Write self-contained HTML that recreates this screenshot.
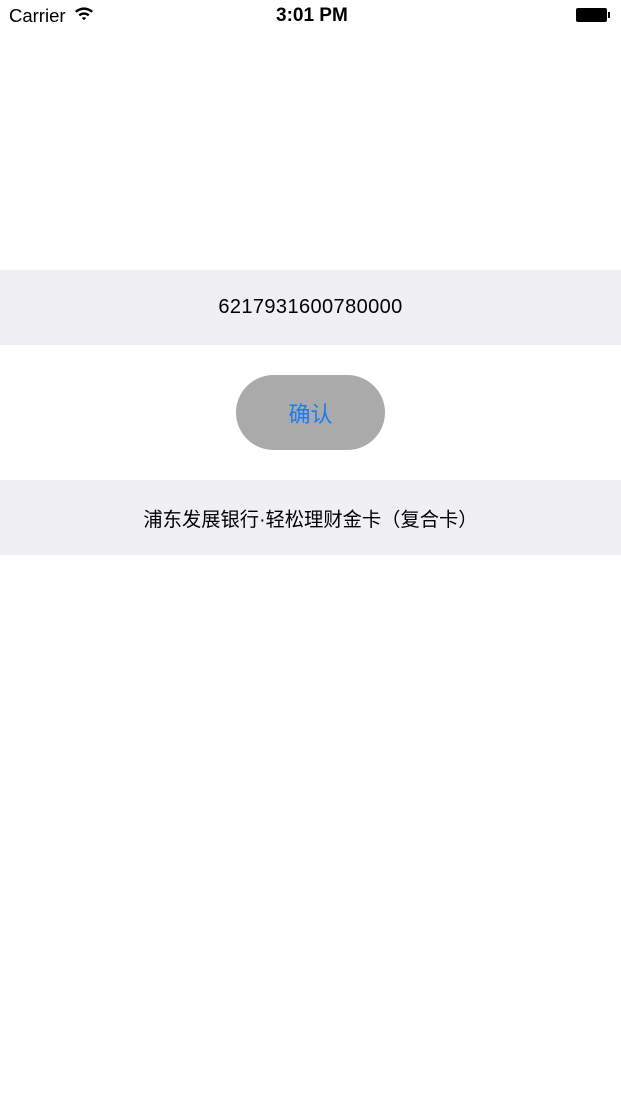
<!DOCTYPE html>
<html><head><meta charset="utf-8"><style>
body{margin:0;width:621px;height:1104px;background:#fff;position:relative;overflow:hidden;font-family:"Liberation Sans","Noto Sans CJK SC",sans-serif;}
.sb{position:absolute;top:0;left:0;width:621px;height:32px;font-size:18.5px;}
.bar{position:absolute;left:0;width:621px;height:75px;background:#efeff4;display:flex;align-items:center;justify-content:center;color:#000;}
.btn{position:absolute;left:236px;top:375px;width:149px;height:75px;border-radius:37.5px;background:#aaaaaa;color:#1a7cf5;font-size:22px;display:flex;align-items:center;justify-content:center;}
</style></head><body>
<div class="sb">
<span style="position:absolute;left:9px;top:5px;">Carrier</span>
<svg style="position:absolute;left:74px;top:6px" width="20" height="15" viewBox="0 0 20 15"><path d="M1 5 A13 13 0 0 1 19 5 L17.3 6.8 A10.5 10.5 0 0 0 2.7 6.8Z M4.4 8.6 A8 8 0 0 1 15.6 8.6 L13.9 10.3 A5.6 5.6 0 0 0 6.1 10.3Z M7.8 12 A3.2 3.2 0 0 1 12.2 12 L10 14.3Z" fill="#000"/></svg>
<span style="position:absolute;left:276px;top:5px;font-weight:bold;font-size:19px;">3:01 PM</span>
<div style="position:absolute;left:576px;top:8px;width:31px;height:14px;background:#000;border-radius:2px;"></div>
<div style="position:absolute;left:608px;top:12px;width:2px;height:6px;background:#000;"></div>
</div>
<div class="bar" style="top:270px;font-size:20px;letter-spacing:0.4px;">6217931600780000</div>
<div class="btn">确认</div>
<div class="bar" style="top:480px;font-size:19.3px;">浦东发展银行·轻松理财金卡（复合卡）</div>
</body></html>
